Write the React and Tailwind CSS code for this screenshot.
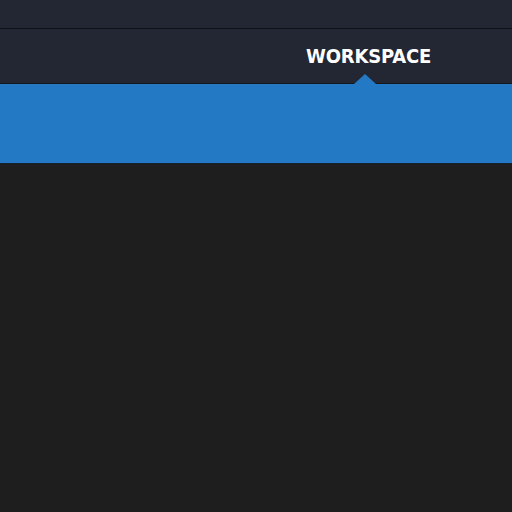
import React from 'react';

const App = () => {
  return (
    <div className="w-[512px] h-[512px] bg-[#1e1e1e] flex flex-col overflow-hidden">
      {/* Top strip */}
      <div className="h-[29px] bg-[#222733] border-b border-[#0f1218]"></div>

      {/* Nav bar */}
      <div className="h-[55px] bg-[#222733] border-b border-[#14171e] flex justify-end pr-[81px]">
        <div className="relative h-full flex items-center">
          <span className="font-['DejaVu_Sans_Condensed','DejaVu_Sans',sans-serif] [font-stretch:condensed] font-bold text-[20px] tracking-[-0.2px] text-white leading-none">
            WORKSPACE
          </span>
          <div className="absolute bottom-[-1px] left-[48px] w-0 h-0 border-l-[11px] border-r-[11px] border-b-[10px] border-l-transparent border-r-transparent border-b-[#2379c4]"></div>
        </div>
      </div>

      {/* Blue band */}
      <div className="h-[80px] bg-[#2379c4] border-b border-[#15202b]"></div>

      {/* Body */}
      <div className="flex-1 bg-[#1e1e1e]"></div>
    </div>
  );
};

export default App;
